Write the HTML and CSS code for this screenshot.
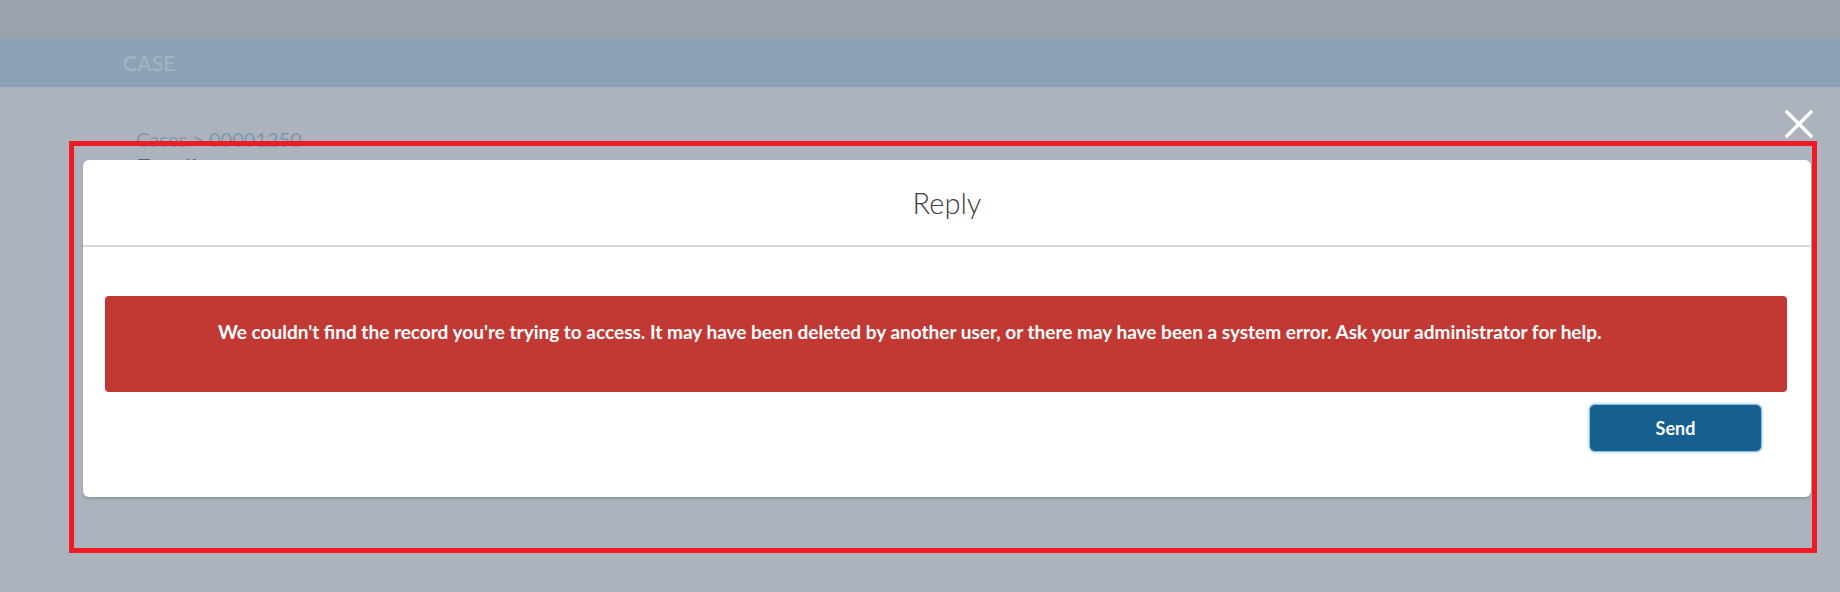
FILE: index.html
```html
<!DOCTYPE html>
<html>

<head>
  <meta charset="utf-8">
  <meta name="viewport" content="width=device-width">
  <title>Case 00001250 - Reply</title>
  <link rel="stylesheet" href="styles.css">
</head>

<body>

  <div class="topbar"></div>

  <div class="tabbar">
    <span class="tab-label">CASE</span>
  </div>

  <main class="record">
    <div class="crumbs">Cases &gt; 00001250</div>
    <h2 class="record-title">Email</h2>
  </main>

  <!-- annotation around the dialog -->
  <div class="highlight-frame"></div>

  <button class="modal-close" title="Close">
    <svg width="28" height="28" viewBox="0 0 28 28">
      <path d="M2 2 L26 26 M26 2 L2 26" stroke="#ffffff" stroke-width="3.4" stroke-linecap="square" fill="none" />
    </svg>
  </button>

  <section class="modal">
    <header class="modal-header">
      <h2>Reply</h2>
    </header>
    <div class="modal-body">
      <div class="alert">
        We couldn't find the record you're trying to access. It may have been deleted by another user, or there may have been a system error. Ask your administrator for help.
      </div>
      <div class="actions">
        <button class="send-btn">Send</button>
      </div>
    </div>
  </section>

</body>

</html>
```

FILE: styles.css
```css
body {
  font-family: 'Lato', 'Open Sans', sans-serif;
  margin: 0;
  background: #acb3bc;
  width: 1840px;
  height: 592px;
  overflow: hidden;
  position: relative;
}

.topbar {
  height: 38px;
  background: #9aa3ab;
}

.tabbar {
  height: 49px;
  background: #8ca3b7;
  display: flex;
  align-items: center;
  padding-left: 123px;
}

.tab-label {
  color: #a9b4bd;
  font-size: 21px;
  letter-spacing: 0.2px;
}

.record {
  padding: 40px 0 0 136px;
}

.crumbs {
  color: #7e98ae;
  font-size: 20px;
  line-height: 24px;
}

.record-title {
  margin: 2px 0 0;
  color: #63676d;
  font-size: 26px;
  font-weight: 400;
}

.highlight-frame {
  position: absolute;
  left: 69px;
  top: 141px;
  width: 1738px;
  height: 402px;
  border: 5px solid #ed1c24;
}

.modal-close {
  position: absolute;
  left: 1785px;
  top: 110px;
  width: 28px;
  height: 28px;
  padding: 0;
  border: none;
  background: transparent;
  cursor: pointer;
}

.modal-close svg {
  display: block;
}

.modal {
  position: absolute;
  left: 83px;
  top: 160px;
  width: 1728px;
  height: 337px;
  background: #ffffff;
  border-radius: 6px;
  box-shadow: 0 2px 3px rgba(0, 0, 0, 0.16);
}

.modal-header {
  height: 85px;
  border-bottom: 2px solid #d8d8d8;
  display: flex;
  align-items: center;
  justify-content: center;
}

.modal-header h2 {
  margin: 0;
  padding-bottom: 1px;
  color: #3e3e3c;
  font-size: 29px;
  font-weight: 300;
}

.modal-body {
  padding: 49px 24px 0 22px;
}

.alert {
  height: 96px;
  box-sizing: border-box;
  padding: 22px 24px 0 113px;
  background: #c23934;
  border-radius: 4px;
  color: #ffffff;
  font-size: 19px;
  font-weight: 700;
  line-height: 27px;
}

.actions {
  display: flex;
  justify-content: flex-end;
  padding: 12px 25px 0 0;
}

.send-btn {
  width: 173px;
  height: 48px;
  background-color: #165f8f;
  border: 1px solid #8ec2ea;
  border-radius: 6px;
  box-shadow: 0 0 3px #8ec2ea;
  color: #ffffff;
  font-family: 'Lato', 'Open Sans', sans-serif;
  font-size: 18px;
  font-weight: 700;
  cursor: pointer;
}
```
